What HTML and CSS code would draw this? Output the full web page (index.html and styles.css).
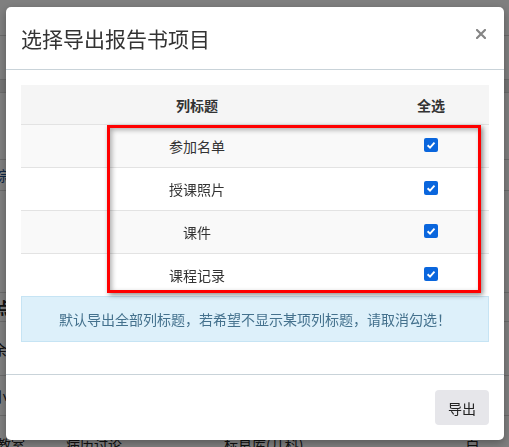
FILE: index.html
```html
<!DOCTYPE html>
<html lang="zh-CN">
<head>
  <meta charset="UTF-8" />
  <meta name="viewport" content="width=device-width, initial-scale=1.0"/>
  <title>导出报告书</title>
  <link rel="stylesheet" href="styles.css">
</head>
<body>
  <!-- Page behind the dialog -->
  <div class="page">
    <div class="bg-row r1"></div>
    <div class="bg-row r2"></div>
    <div class="bg-row r3"></div>
    <div class="bg-row r4"></div>
    <div class="bg-row r5"><span class="bg-link">综</span></div>
    <div class="bg-row r6"></div>
    <div class="bg-row r7"><span class="bg-bold">点</span></div>
    <div class="bg-row r8"><span class="bg-cell">余</span></div>
    <div class="bg-row r9"><span class="bg-cell">小</span></div>
    <div class="bg-row r10">
      <span class="bg-cell c1">教室</span>
      <span class="bg-cell c2">病历讨论</span>
      <span class="bg-cell c3">标良库(几科)</span>
      <span class="bg-cell c4">白</span>
    </div>
  </div>

  <div class="backdrop"></div>

  <!-- Export dialog -->
  <div class="modal">
    <div class="modal-header">
      <h4 class="modal-title">选择导出报告书项目</h4>
      <button class="close" type="button">
        <svg width="10" height="10" viewBox="0 0 10 10">
          <path d="M1 1L9 9M9 1L1 9" stroke="#858585" stroke-width="2.2" stroke-linecap="square"/>
        </svg>
      </button>
    </div>

    <div class="modal-body">
      <div class="cols">
        <div class="cols-row cols-head">
          <div>列标题</div>
          <div>全选</div>
        </div>
        <div class="cols-row odd">
          <div>参加名单</div>
          <div class="cell-check"><span class="check"><svg width="14" height="14" viewBox="0 0 14 14"><path d="M3.6 7.3L6 9.6L10.5 4.6" fill="none" stroke="#fff" stroke-width="1.9"/></svg></span></div>
        </div>
        <div class="cols-row">
          <div>授课照片</div>
          <div class="cell-check"><span class="check"><svg width="14" height="14" viewBox="0 0 14 14"><path d="M3.6 7.3L6 9.6L10.5 4.6" fill="none" stroke="#fff" stroke-width="1.9"/></svg></span></div>
        </div>
        <div class="cols-row odd">
          <div>课件</div>
          <div class="cell-check"><span class="check"><svg width="14" height="14" viewBox="0 0 14 14"><path d="M3.6 7.3L6 9.6L10.5 4.6" fill="none" stroke="#fff" stroke-width="1.9"/></svg></span></div>
        </div>
        <div class="cols-row">
          <div>课程记录</div>
          <div class="cell-check"><span class="check"><svg width="14" height="14" viewBox="0 0 14 14"><path d="M3.6 7.3L6 9.6L10.5 4.6" fill="none" stroke="#fff" stroke-width="1.9"/></svg></span></div>
        </div>
        <!-- highlight frame -->
        <div class="mark"></div>
      </div>

      <div class="alert">默认导出全部列标题，若希望不显示某项列标题，请取消勾选！</div>
    </div>

    <div class="modal-footer">
      <button class="btn" type="button">导出</button>
    </div>
  </div>
</body>
</html>
```

FILE: styles.css
```css
body {
  margin: 0;
  padding: 0;
  font-family: "Noto Sans CJK SC", "Liberation Sans", sans-serif;
  color: #333;
  overflow: hidden;
}

/* background page */
.page {
  background: #fff;
  height: 447px;
  overflow: hidden;
}

.bg-row {
  border-bottom: 1px solid #d6d6d6;
  display: flex;
  align-items: center;
  font-size: 14px;
  color: #222;
  white-space: nowrap;
}

.r1 { height: 35px; }
.r2 { height: 43px; }
.r3 { height: 12px; background: #e9e9e9; }
.r4 { height: 66px; }
.r5 { height: 30px; }
.r6 { height: 101px; }
.r7 { height: 28px; }
.r8 { height: 53px; }
.r9 { height: 39px; }
.r10 {
  height: 31px;
  align-items: flex-start;
  padding-top: 20px;
  line-height: 16px;
  border-bottom: none;
}

.bg-link {
  margin-left: -6px;
  color: #1d4f8c;
}

.bg-bold {
  margin-left: -4px;
  font-weight: bold;
  font-size: 16px;
}

.bg-cell {
  margin-left: -7px;
}

.c1 { margin-left: -3px; }
.c2 { margin-left: 41px; }
.c3 { margin-left: 102px; }
.c4 { margin-left: 162px; }

.backdrop {
  position: fixed;
  top: 0;
  left: 0;
  right: 0;
  bottom: 0;
  background: rgba(0, 0, 0, 0.5);
}

/* dialog */
.modal {
  position: fixed;
  top: 7px;
  left: 6px;
  width: 498px;
  height: 433px;
  background: #fff;
  border-radius: 5px;
  box-shadow: 0 3px 9px rgba(0, 0, 0, 0.3);
  display: flex;
  flex-direction: column;
  overflow: hidden;
}

.modal-header {
  display: flex;
  justify-content: space-between;
  align-items: flex-start;
  padding: 17px 15px;
  border-bottom: 1px solid #c9d3d9;
}

.modal-title {
  margin: 0;
  font-size: 21px;
  line-height: 28px;
  font-weight: normal;
  color: #333;
}

.close {
  border: none;
  background: none;
  padding: 0;
  margin: 5px 3px 0 0;
  width: 10px;
  height: 10px;
  cursor: pointer;
  display: flex;
}

.modal-body {
  padding: 15px 15px 32px;
}

.cols {
  position: relative;
  font-size: 14px;
}

.cols-row {
  display: grid;
  grid-template-columns: 352px 116px;
  height: 43px;
  align-items: center;
  text-align: center;
  border-top: 1px solid #e3e3e3;
  box-sizing: border-box;
}

.cols-head {
  height: 39px;
  border-top: none;
  background: #f5f5f5;
  font-weight: bold;
}

.cols-row.odd {
  background: #f9f9f9;
}

.cell-check {
  display: flex;
  justify-content: center;
  align-items: center;
}

.check {
  display: flex;
  width: 14px;
  height: 14px;
  margin-top: -2px;
  border-radius: 2px;
  background: #0a66dd;
}

.mark {
  position: absolute;
  left: 86px;
  top: 40px;
  width: 374px;
  height: 168px;
  box-sizing: border-box;
  border: 3px solid #ff0000;
  box-shadow: 2px 2px 5px rgba(0, 0, 0, 0.45), inset 2px 2px 5px rgba(0, 0, 0, 0.3);
  pointer-events: none;
}

.alert {
  height: 46px;
  box-sizing: border-box;
  border: 1px solid #c6e4f4;
  background: #ddf0fa;
  color: #44718d;
  font-size: 14px;
  display: flex;
  align-items: center;
  justify-content: center;
}

.modal-footer {
  border-top: 1px solid #c9d3d9;
  padding: 15px;
  display: flex;
  justify-content: flex-end;
}

.btn {
  width: 54px;
  height: 35px;
  border: none;
  border-radius: 4px;
  background: #e6e6ea;
  color: #222;
  font-family: inherit;
  font-size: 14px;
  cursor: pointer;
}
```
